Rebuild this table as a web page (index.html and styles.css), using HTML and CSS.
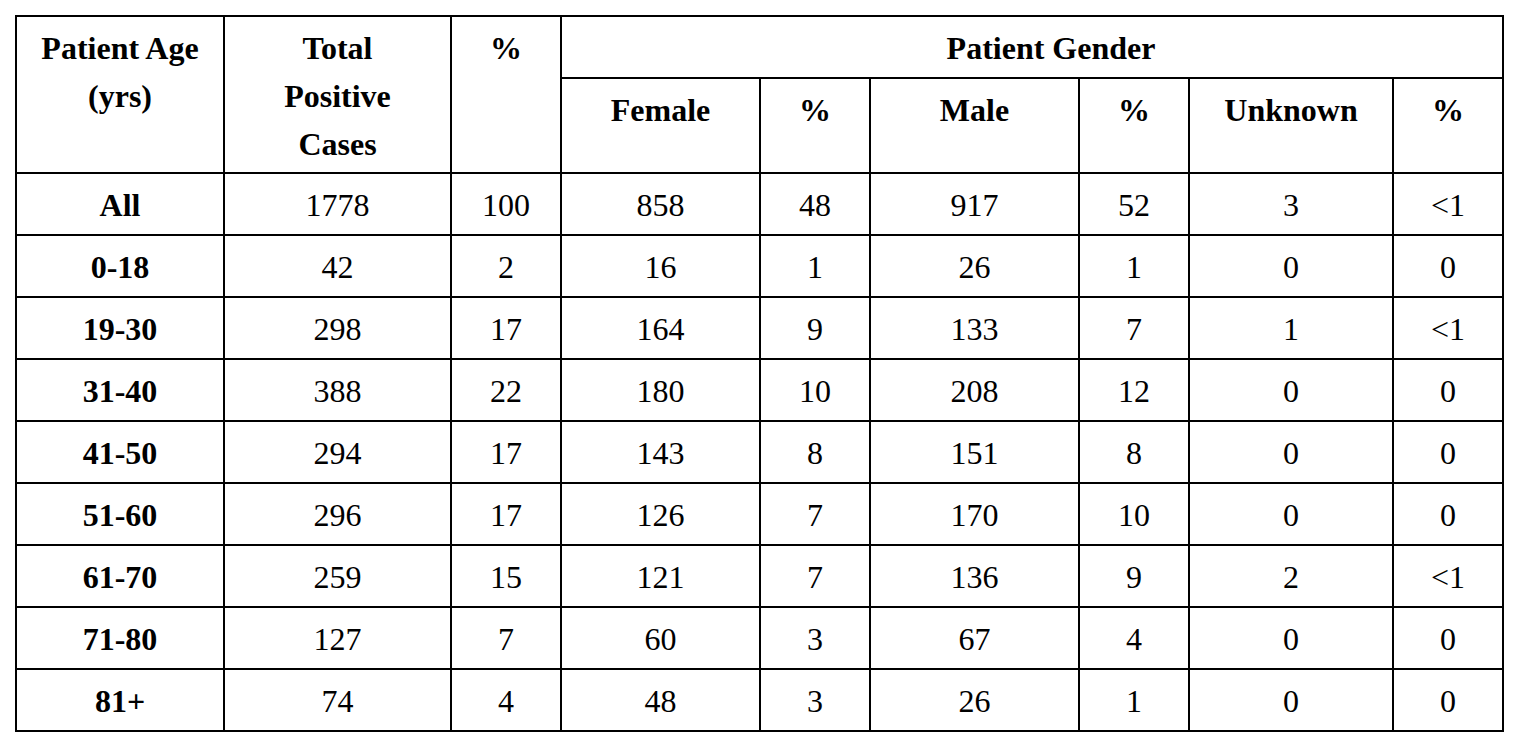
FILE: index.html
```html
<!DOCTYPE html>
<html>
<head>
<meta charset="utf-8">
<link rel="stylesheet" href="styles.css">
</head>
<body>
<div class="wrap">
<table class="cases">
  <colgroup>
    <col class="c-age"><col class="c-total"><col class="c-pct"><col class="c-fem"><col class="c-pct"><col class="c-male"><col class="c-pct"><col class="c-unk"><col class="c-pct">
  </colgroup>
  <thead>
    <tr class="h1">
      <th rowspan="2" class="tall">Patient Age<br>(yrs)</th>
      <th rowspan="2" class="tall">Total<br>Positive<br>Cases</th>
      <th rowspan="2" class="tall">%</th>
      <th colspan="6" class="gender">Patient Gender</th>
    </tr>
    <tr class="h2">
      <th>Female</th><th>%</th><th>Male</th><th>%</th><th>Unknown</th><th>%</th>
    </tr>
  </thead>
  <tbody>
    <tr><th>All</th><td>1778</td><td>100</td><td>858</td><td>48</td><td>917</td><td>52</td><td>3</td><td>&lt;1</td></tr>
    <tr><th>0-18</th><td>42</td><td>2</td><td>16</td><td>1</td><td>26</td><td>1</td><td>0</td><td>0</td></tr>
    <tr><th>19-30</th><td>298</td><td>17</td><td>164</td><td>9</td><td>133</td><td>7</td><td>1</td><td>&lt;1</td></tr>
    <tr><th>31-40</th><td>388</td><td>22</td><td>180</td><td>10</td><td>208</td><td>12</td><td>0</td><td>0</td></tr>
    <tr><th>41-50</th><td>294</td><td>17</td><td>143</td><td>8</td><td>151</td><td>8</td><td>0</td><td>0</td></tr>
    <tr><th>51-60</th><td>296</td><td>17</td><td>126</td><td>7</td><td>170</td><td>10</td><td>0</td><td>0</td></tr>
    <tr><th>61-70</th><td>259</td><td>15</td><td>121</td><td>7</td><td>136</td><td>9</td><td>2</td><td>&lt;1</td></tr>
    <tr><th>71-80</th><td>127</td><td>7</td><td>60</td><td>3</td><td>67</td><td>4</td><td>0</td><td>0</td></tr>
    <tr><th>81+</th><td>74</td><td>4</td><td>48</td><td>3</td><td>26</td><td>1</td><td>0</td><td>0</td></tr>
  </tbody>
</table>
</div>
</body>
</html>
```
FILE: styles.css
```css
html, body {
  margin: 0;
  padding: 0;
  background: #ffffff;
}
.wrap {
  padding: 15px 0 0 15px;
}
.cases {
  border-collapse: collapse;
  table-layout: fixed;
  width: 1489px;
  font-family: "Liberation Serif", "Times New Roman", serif;
  font-size: 32px;
  line-height: 47px;
  color: #000;
}
.c-age { width: 208px; }
.c-total { width: 227px; }
.c-pct { width: 110px; }
.c-fem { width: 199px; }
.c-male { width: 209px; }
.c-unk { width: 204px; }
.cases th, .cases td {
  border: 2px solid #000;
  text-align: center;
  padding: 8px 4px 5px;
  vertical-align: middle;
  white-space: nowrap;
}
.cases th { font-weight: bold; }
.cases td { font-weight: normal; }
.cases thead th {
  vertical-align: top;
  line-height: 48px;
  padding: 7px 4px 5px;
}
.cases thead th.tall {
  padding: 7px 4px 4px;
}
.cases thead .h2 th {
  padding: 7px 4px 38px;
}
.cases thead th.gender {
  padding-left: 42px;
}
```
